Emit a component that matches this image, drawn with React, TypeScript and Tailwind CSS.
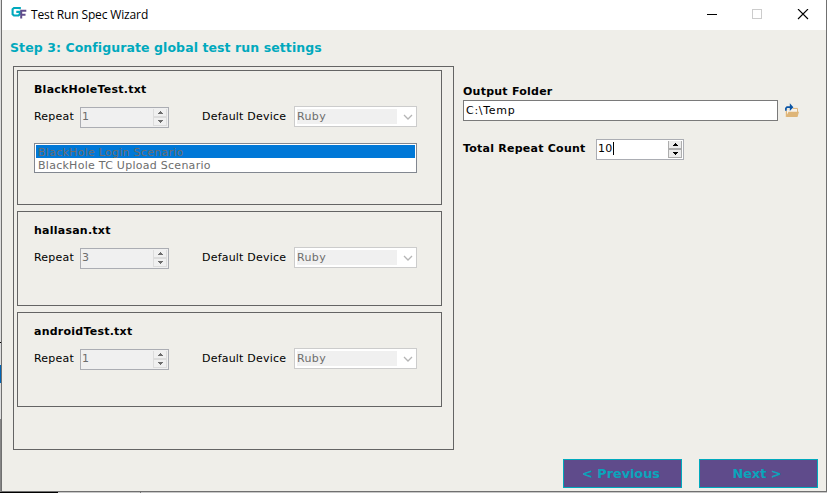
import React from "react";

const regular = "font-['DejaVu_Sans',Verdana,sans-serif] text-[11px] whitespace-nowrap";
const bold = "font-['DejaVu_Sans',Verdana,sans-serif] text-[11px] tracking-[0.24px] font-bold whitespace-nowrap text-black";

function AppLogo() {
  return (
    <svg width="16" height="14" viewBox="0 0 16 14" fill="none">
      <path d="M8.800 3.200V2H3L1.600 3.300V8.200L3 9.500H7.500L8.800 8.300V5.900H5.300" stroke="#00a9bd" strokeWidth="2.100" />
      <path d="M10.200 12.600V4.800H15.300M10.200 8.700H14.500" stroke="#5f4b8b" strokeWidth="2" />
    </svg>
  );
}

function FolderIcon() {
  return (
    <svg width="16" height="16" viewBox="0 0 16 16" fill="none">
      <path d="M1.500 15V7.500H5L6.500 6H13.500V10" fill="#f7f2ea" stroke="#f3e3ca" />
      <path d="M2.500 14V9M9 6.500H13.500V10" stroke="#dfb77e" />
      <path d="M1.800 15L4.500 9.700H15L13.500 15Z" fill="#deb578" />
      <path d="M1.900 8.700V6.300L3 5.200H7" stroke="#0b55a5" strokeWidth="1.700" />
      <path d="M5.800 1.300L9.400 5.200L5.800 9Z" fill="#0b55a5" />
    </svg>
  );
}

function SpinButtons({ disabled }: { disabled?: boolean }) {
  const tone = disabled ? "border-[#dcdcdc] bg-[#f0f0f0]" : "border-[#adadad] bg-[#ececec]";
  const fill = disabled ? "#6d6d6d" : "#000";
  return (
    <div className="flex h-[17px] w-[14px] shrink-0 flex-col">
      <div className={`flex h-[9px] items-center justify-center border-x border-b-2 ${tone}`}>
        <svg width="5" height="3" viewBox="0 0 5 3" shapeRendering="crispEdges">
          <path d="M2 0H3V1H4V2H5V3H0V2H1V1H2Z" fill={fill} />
        </svg>
      </div>
      <div className={`flex h-[8px] items-start justify-center border-x border-b pt-[2px] ${tone}`}>
        <svg width="5" height="3" viewBox="0 0 5 3" shapeRendering="crispEdges">
          <path d="M0 0H5V1H4V2H3V3H2V2H1V1H0Z" fill={fill} />
        </svg>
      </div>
    </div>
  );
}

function Spinner({ value, disabled }: { value: string; disabled?: boolean }) {
  return (
    <div
      className={`flex h-[21px] items-start border border-[#abadb3] pt-px pr-px pl-px ${
        disabled ? "w-[89px] bg-[#f0f0f0] text-[#6d6d6d]" : "w-[88px] bg-white text-black"
      }`}
    >
      <span className={`${regular} leading-[16px] tracking-[0.3px]`}>{value}</span>
      {!disabled && <span className="mt-px h-[13px] w-px bg-black" />}
      <span className="flex-1" />
      <SpinButtons disabled={disabled} />
    </div>
  );
}

function DeviceSelect({ value }: { value: string }) {
  return (
    <div className="flex h-[21px] w-[123px] border border-[#cccccc] bg-white p-[2px]">
      <div className={`h-[15px] w-[100px] bg-[#f0f0f0] ${regular} leading-[15px] tracking-[0.35px] text-[#6d6d6d]`}>
        {value}
      </div>
      <svg className="mt-[5px] ml-[6px]" width="10" height="7" viewBox="0 0 10 7" fill="none">
        <path d="M1 1L5 5L9 1" stroke="#b5b5b5" strokeWidth="1.300" />
      </svg>
    </div>
  );
}

interface SpecProps {
  name: string;
  repeat: string;
  scenarios?: string[];
}

function SpecCard({ name, repeat, scenarios }: SpecProps) {
  return (
    <section className={`border border-[#646464] pt-[11px] pl-4 ${scenarios ? "h-[135px]" : "h-[95px]"}`}>
      <h2 className={`${bold} h-[14px] leading-[15px]`}>{name}</h2>
      <div className="mt-[10px] flex h-[22px] items-start">
        <span className={`${regular} mt-px w-[46px] leading-[19px] tracking-[0.22px] text-black`}>Repeat</span>
        <div className="mt-px">
          <Spinner value={repeat} disabled />
        </div>
        <span className={`${regular} mt-px ml-[33px] w-[92px] leading-[19px] tracking-[0.2px] text-black`}>
          Default Device
        </span>
        <DeviceSelect value="Ruby" />
      </div>
      {scenarios && (
        <div
          className={`mt-[15px] h-[30px] w-[383px] border border-[#828790] bg-white p-px ${regular} tracking-[0.27px] text-[#6d6d6d]`}
        >
          {scenarios.map((s, i) => (
            <div key={s} className={`h-[13px] pl-[2px] leading-[15px] ${i === 0 ? "bg-[#0078d7]" : ""}`}>
              {s}
            </div>
          ))}
        </div>
      )}
    </section>
  );
}

function WizardButton({ children }: { children: React.ReactNode }) {
  return (
    <button className="flex h-[29px] w-[119px] items-center justify-center border border-[#00a9bd] bg-[#5f4b8b] pr-[3px] font-['DejaVu_Sans',Verdana,sans-serif] text-[12.8px] font-bold whitespace-nowrap text-[#0aa5bb]">
      {children}
    </button>
  );
}

export default function App() {
  return (
    <div className="flex h-[493px] w-[827px] flex-col overflow-hidden bg-white">
      <div className="flex h-[492px]">
        <div className="flex w-px shrink-0 flex-col bg-[#dddddd]">
          <div className="mt-[342px] h-px bg-black" />
          <div className="mt-[22px] h-[18px] bg-[#0064b4]" />
          <div className="mt-[36px] flex-1 bg-[#858585]" />
        </div>
        <div className="flex w-[826px] flex-col border-r border-b border-l border-[#707070] bg-[#efeee9]">
          <header className="flex h-[30px] shrink-0 items-start bg-white">
            <div className="mt-[6px] ml-[9px]">
              <AppLogo />
            </div>
            <span className="mt-[6px] ml-[4px] font-['Open_Sans','Noto_Sans',sans-serif] text-[12px] leading-[17px] tracking-[-0.14px] whitespace-nowrap text-black">
              Test Run Spec Wizard
            </span>
            <span className="flex-1" />
            <svg className="mt-[9px] mr-[17px]" width="102" height="11" viewBox="0 0 102 11" fill="none">
              <path d="M0 5.500H10" stroke="#000" />
              <rect x="45.500" y="0.500" width="9" height="9" stroke="#cccccc" />
              <path d="M91 0L101 10M101 0L91 10" stroke="#000" strokeWidth="1.100" />
            </svg>
          </header>
          <h1 className="mt-[9px] ml-2 h-[17px] font-['DejaVu_Sans',Verdana,sans-serif] text-[12.5px] leading-[17px] font-bold tracking-[0.08px] whitespace-nowrap text-[#00a9bd]">
            Step 3: Configurate global test run settings
          </h1>
          <main className="mt-[10px] flex pl-[11px]">
            <div className="flex h-[384px] w-[441px] shrink-0 flex-col gap-[6px] border border-[#646464] p-[3px] pr-[11px]">
              <SpecCard
                name="BlackHoleTest.txt"
                repeat="1"
                scenarios={["BlackHole Login Scenario", "BlackHole TC Upload Scenario"]}
              />
              <SpecCard name="hallasan.txt" repeat="3" />
              <SpecCard name="androidTest.txt" repeat="1" />
            </div>
            <div className="ml-[9px] pt-[17px]">
              <div className={`${bold} h-[17px] leading-[17px]`}>Output Folder</div>
              <div className="flex">
                <div
                  className={`h-[21px] w-[315px] border border-[#7a7a7a] bg-white pl-[2px] ${regular} leading-[19px] tracking-[0.7px] text-black`}
                >
                  C:\Temp
                </div>
                <div className="mt-[2px] ml-[6px]">
                  <FolderIcon />
                </div>
              </div>
              <div className="mt-[18px] flex">
                <span className={`${bold} w-[133px] leading-[19px]`}>Total Repeat Count</span>
                <Spinner value="10" />
              </div>
            </div>
          </main>
          <footer className="mt-[9px] mr-2 flex justify-end gap-[17px]">
            <WizardButton>&lt; Previous</WizardButton>
            <WizardButton>Next &gt;</WizardButton>
          </footer>
        </div>
      </div>
      <div className="flex h-px bg-[#c8c8c8]">
        <div className="w-[58px] bg-black" />
        <div className="ml-[82px] w-px bg-[#777777]" />
      </div>
    </div>
  );
}
